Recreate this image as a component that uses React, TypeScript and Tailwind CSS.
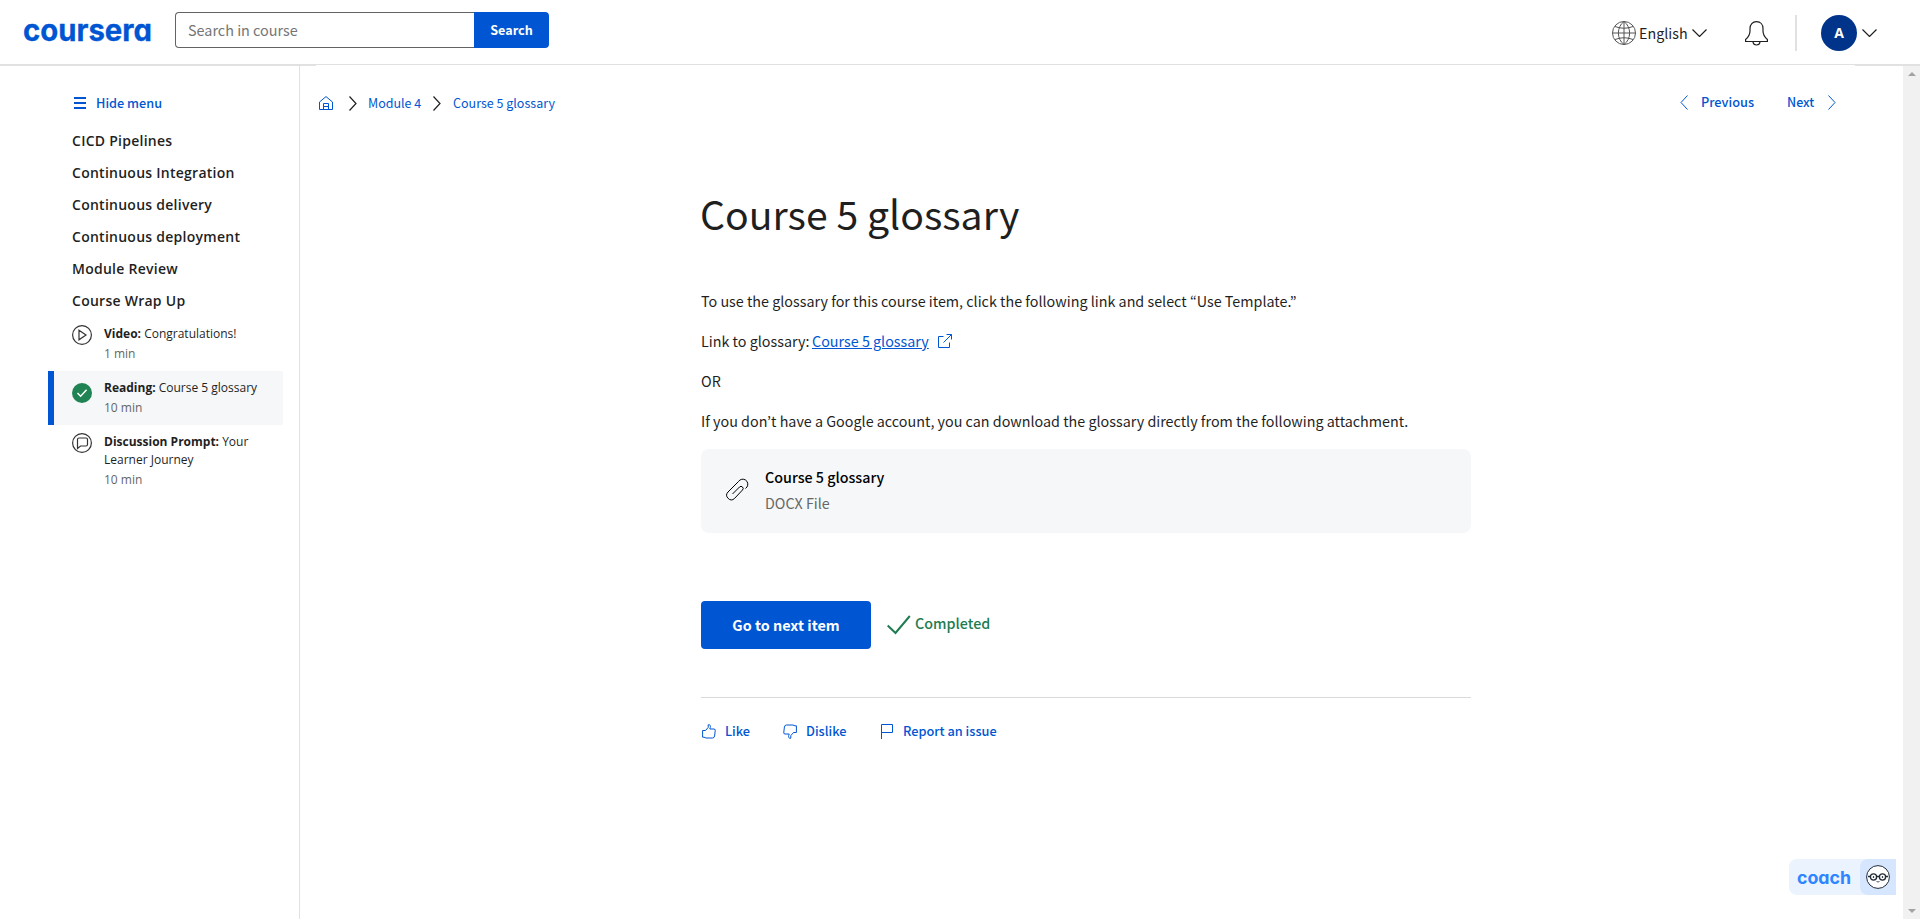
import React from "react";

const sans = "font-['Noto_Sans_CJK_KR','Noto_Sans',sans-serif]";
const open = "font-['Open_Sans',sans-serif]";

type IconProps = { className?: string; d: string; box: string; w?: number };
function Icon({ className = "", d, box, w = 1 }: IconProps) {
  return (
    <svg viewBox={box} className={`shrink-0 ${className}`} fill="none" stroke="currentColor" strokeWidth={w}>
      <path d={d} />
    </svg>
  );
}

const chevronRight = "M.5 .5L7 7.5L.5 14.5";
const chevronLeft = "M7.5 .5L1 7.5L7.5 14.5";
const chevronDown = "M.5 .5L7.5 7.5L14.5 .5";

function Header() {
  return (
    <header className="flex h-[65px] shrink-0 items-start border-b border-[#e1e1e1]">
      <svg viewBox="0 0 136 50" className="mt-1 ml-[19px] h-[50px] w-[136px] overflow-visible">
        <text x="4" y="37" textLength="129" lengthAdjust="spacingAndGlyphs" fill="#0056d2" stroke="#0056d2" strokeWidth=".3" className="font-['Inter',sans-serif] text-[30px] font-bold [font-feature-settings:'cv11']">coursera</text>
      </svg>
      <div className="mt-3 ml-[20px] flex h-9 w-[374px]">
        <div className="flex w-[299px] items-center rounded-l-[4px] border border-r-0 border-[#636363] pl-3 text-[14.4px] text-[#757575]">Search in course</div>
        <button className="flex-1 rounded-r-[4px] bg-[#0056d2] text-[12.6px] font-bold text-white">Search</button>
      </div>
      <div className="ml-auto flex h-[66px] items-center text-[#1f1f1f]">
        <Icon box="0 0 24 24" className="size-6 text-[#555]" d="M12 .5a11.5 11.5 0 1 0 0 23a11.5 11.5 0 1 0 0-23M.5 12h23M3 5.500Q12 9 21 5.500M3 18.500Q12 15 21 18.500M12 .5C4.500 6 4.500 18 12 23.500C19.500 18 19.500 6 12 .5M12 .5V23.500" />
        <span className="ml-[3px] w-[49px] text-[14.3px]">English</span>
        <Icon box="0 0 15 8" className="ml-1 h-2 w-[15px]" w={1.2} d={chevronDown} />
        <Icon box="0 0 23 25" className="ml-[38px] h-[25px] w-[23px]" w={1.2} d="M.6 20.500V18.500C3.500 16 5 14 5 10V7.500C5 3.500 7.500 .6 11.500 .6S18 3.500 18 7.500V10C18 14 19.500 16 22.400 18.500V20.500ZM8 21C8.500 25 14.500 25 15 21" />
        <div className="ml-[27px] h-9 w-[2px] bg-[#e1e1e1]" />
        <div className="ml-6 flex size-9 items-center justify-center rounded-full bg-[#00348a] font-['Open_Sans',sans-serif] text-sm font-bold text-white">A</div>
        <Icon box="0 0 15 8" className="mr-[43px] ml-[5px] h-2 w-[15px]" w={1.2} d={chevronDown} />
      </div>
    </header>
  );
}

const modules = ["CICD Pipelines", "Continuous Integration", "Continuous delivery", "Continuous deployment", "Module Review", "Course Wrap Up"];

function Item({ kind, title, time, icon, active }: { kind: string; title: string; time: string; icon: React.ReactNode; active?: boolean }) {
  return (
    <li className={`flex w-[235px] border-l-[6px] pt-2 pr-3 pb-2 pl-[18px] ${active ? "border-[#0056d2] bg-[#f5f7f8]" : "border-transparent"}`}>
      <div className={`mr-3 size-5 shrink-0 ${active ? "mt-1" : ""}`}>{icon}</div>
      <div className="text-[12px] leading-[18px] text-[#1f1f1f]">
        <p><b>{kind}:</b> {title}</p>
        <p className="mt-[2px] text-[#666]">{time}</p>
      </div>
    </li>
  );
}

function Sidebar() {
  return (
    <aside className="w-[300px] shrink-0 border-r border-[#e1e1e1]">
      <button className="mt-7 ml-[74px] flex h-5 items-center text-[12.7px] font-medium text-[#0056d2]">
        <Icon box="0 0 12 12" className="mr-[10px] size-3" w={2} d="M0 1H12M0 6H12M0 11H12" />
        Hide menu
      </button>
      <div className={open}>
        <ul className="mt-3 pl-[72px] text-[14px] leading-8 font-semibold tracking-[0.26px] text-[#1f1f1f]">
          {modules.map((m) => <li key={m}>{m}</li>)}
        </ul>
        <ul className="ml-12">
          <Item kind="Video" title="Congratulations!" time="1 min" icon={<Icon box="0 0 20 20" className="size-5 text-[#333]" d="M10 .6a9.400 9.400 0 1 0 0 18.800a9.400 9.400 0 1 0 0-18.800M7 5.200L14 10L7 14.800Z" w={1.2} />} />
          <Item active kind="Reading" title="Course 5 glossary" time="10 min" icon={<svg viewBox="0 0 20 20" className="size-5"><circle cx="10" cy="10" r="10" fill="#1f8354" /><path d="M5.500 10L8.600 13.200L14.600 6.800" fill="none" stroke="white" strokeWidth="1.500" /></svg>} />
          <Item kind="Discussion Prompt" title="Your Learner Journey" time="10 min" icon={<Icon box="0 0 20 20" className="size-5 text-[#333]" d="M10 .6a9.400 9.400 0 1 0 0 18.800a9.400 9.400 0 1 0 0-18.800M7 5H14Q15.500 5 15.500 6.500V11.500Q15.500 13 14 13H8.500L5.500 15.500V6.500Q5.500 5 7 5Z" w={1.2} />} />
        </ul>
      </div>
    </aside>
  );
}

const thumbUp = "M.6 6.500H3.500L6.200 3.400V.8C8 .3 8.800 1.800 8.300 3.400L7.800 5H12Q13.800 5.200 13.200 6.800L12.600 12Q12.300 14 10.500 14H4L2 13.200H.6Z";

function Content() {
  return (
    <main className="flex min-w-0 flex-1 flex-col">
      <div className="mt-[27px] flex h-5 items-center pr-[67px] pl-[19px] text-[12.5px] leading-5 whitespace-nowrap text-[#0056d2]">
        <div className="flex items-center pt-[2px]">
          <Icon box="0 0 14 14" className="size-[14px]" d="M.5 6L7 .6L13.500 6V13.500H.5ZM4.500 13.500V7.500H9.500V13.500M4.500 10.500H9.500" />
          <Icon box="0 0 8 15" className="mr-[11px] ml-4 h-[15px] w-2 text-[#1f1f1f]" w={1.2} d={chevronRight} />
          <span className="w-[54px]">Module 4</span>
          <Icon box="0 0 8 15" className="mr-3 ml-[11px] h-[15px] w-2 text-[#1f1f1f]" w={1.2} d={chevronRight} />
          <span>Course 5 glossary</span>
        </div>
        <div className="ml-auto flex items-center font-medium">
          <Icon box="0 0 8 15" className="h-[15px] w-2" d={chevronLeft} />
          <span className="ml-[13px] w-[54px] text-[12.75px]">Previous</span>
          <span className="ml-8 w-7">Next</span>
          <Icon box="0 0 8 15" className="ml-[13px] h-[15px] w-2" d={chevronRight} />
        </div>
      </div>
      <article className="mt-[73px] ml-[401px] w-[770px] text-[#1f1f1f]">
        <h1 className="-ml-px text-[39.200px] leading-[56px]">Course 5 glossary</h1>
        <div className="mt-[48px] space-y-4 text-[14.33px] leading-6">
          <p>To use the glossary for this course item, click the following link and select “Use Template.”</p>
          <p className="flex items-center">
            <span className="w-[111px]">Link to glossary:</span>
            <a className="text-[#0056d2] underline">Course 5 glossary</a>
            <Icon box="0 0 14 14" className="ml-[9px] size-[14px] text-[#0056d2]" d="M5.500 2.500H.5V13.500H11.500V8.500M8.500 .5H13.500V5.500M13.500 .5L5.500 8.500" />
          </p>
          <p>OR</p>
          <p>If you don’t have a Google account, you can download the glossary directly from the following attachment.</p>
        </div>
        <div className="mt-4 flex h-[84px] items-center rounded-lg bg-[#f5f7f8] pb-[2px] pl-6 text-[14.3px] leading-[26px]">
          <Icon box="0 0 24 24" className="mr-4 size-6 text-black" d="M7.500 16L14.500 9A2.100 2.100 0 0 1 17.500 12L9.500 20.500A4.600 4.600 0 0 1 3 14L13.500 3.500A4.700 4.700 0 0 1 22 9L20.500 10.500" />
          <div>
            <p className="font-medium text-black">Course 5 glossary</p>
            <p className="text-[#666]">DOCX File</p>
          </div>
        </div>
        <div className="mt-[68px] flex h-12 items-center text-[14.4px]">
          <button className="h-12 w-[170px] rounded-[4px] bg-[#0056d2] font-bold text-white">Go to next item</button>
          <Icon box="0 0 24 20" w={2} className="ml-4 h-5 w-6 text-[#1d7c50]" d="M.7 10.500L8.500 18L22.800 1" />
          <span className="ml-1 pb-1 text-[14.3px] font-medium text-[#1d7c50]">Completed</span>
        </div>
        <div className="mt-12 flex items-center border-t border-[#dadada] pt-[23px] text-[12.75px] leading-5 font-medium text-[#0056d2]">
          <Icon box="0 0 14 15" className="mr-[9px] ml-px h-[15px] w-[14px]" d={thumbUp} />
          <span className="w-[25px]">Like</span>
          <Icon box="0 0 14 15" className="mr-[9px] ml-[33px] h-[15px] w-[14px] rotate-180" d={thumbUp} />
          <span className="w-[41px]">Dislike</span>
          <Icon box="0 0 12 15" className="mr-[10px] ml-[34px] h-[15px] w-3" d="M.5 15V.5H11.500V8.500H.5" />
          <span>Report an issue</span>
        </div>
      </article>
    </main>
  );
}

export default function App() {
  return (
    <div className={`relative flex h-[919px] w-[1920px] flex-col overflow-hidden bg-white ${sans}`}>
      <Header />
      <div className="flex min-h-0 flex-1">
        <Sidebar />
        <Content />
        <div className="mt-px flex w-[17px] shrink-0 flex-col items-center justify-between bg-[#f1f1f1] py-[6px] text-[#a3a3a3]">
          <svg viewBox="0 0 8 4" className="h-1 w-2" fill="currentColor"><path d="M0 4L4 0L8 4Z" /></svg>
          <svg viewBox="0 0 8 4" className="h-1 w-2" fill="currentColor"><path d="M0 0L4 4L8 0Z" /></svg>
        </div>
      </div>
      <div className="absolute top-[65px] left-0 h-px w-[316px] bg-[#e1e1e1]" />
      <div className="absolute top-[65px] right-0 h-px w-[65px] bg-[#e1e1e1]" />
      <div className="absolute top-[859px] left-[1789px] flex h-9 w-[107px] justify-between rounded-l-lg bg-[#ebf3ff]">
        <svg viewBox="0 0 60 36" className="ml-2 h-9 w-[60px]">
          <text x="0" y="24.500" textLength="54" lengthAdjust="spacingAndGlyphs" fill="#2d85ff" className="font-['Inter',sans-serif] text-[18px] font-bold [font-feature-settings:'cv11']">coach</text>
        </svg>
        <div className="flex w-9 items-center justify-center rounded-l-lg bg-[#d6e6ff]">
          <svg viewBox="0 0 24 24" className="size-6" fill="none" stroke="#222b38">
            <circle cx="12" cy="12" r="11.400" fill="white" />
            <circle cx="7.500" cy="12" r="3.100" strokeWidth="1.300" />
            <circle cx="16.500" cy="12" r="3.100" strokeWidth="1.300" />
            <path d="M10.600 11.500H13.400M2 11.500H4.400M19.600 11.500H22" strokeWidth="1.300" />
            <path d="M10.500 16.500Q12 17.500 13.500 16.500" strokeWidth=".8" />
            <circle cx="7.500" cy="12" r=".5" fill="#222b38" />
            <circle cx="16.500" cy="12" r=".5" fill="#222b38" />
          </svg>
        </div>
      </div>
    </div>
  );
}
